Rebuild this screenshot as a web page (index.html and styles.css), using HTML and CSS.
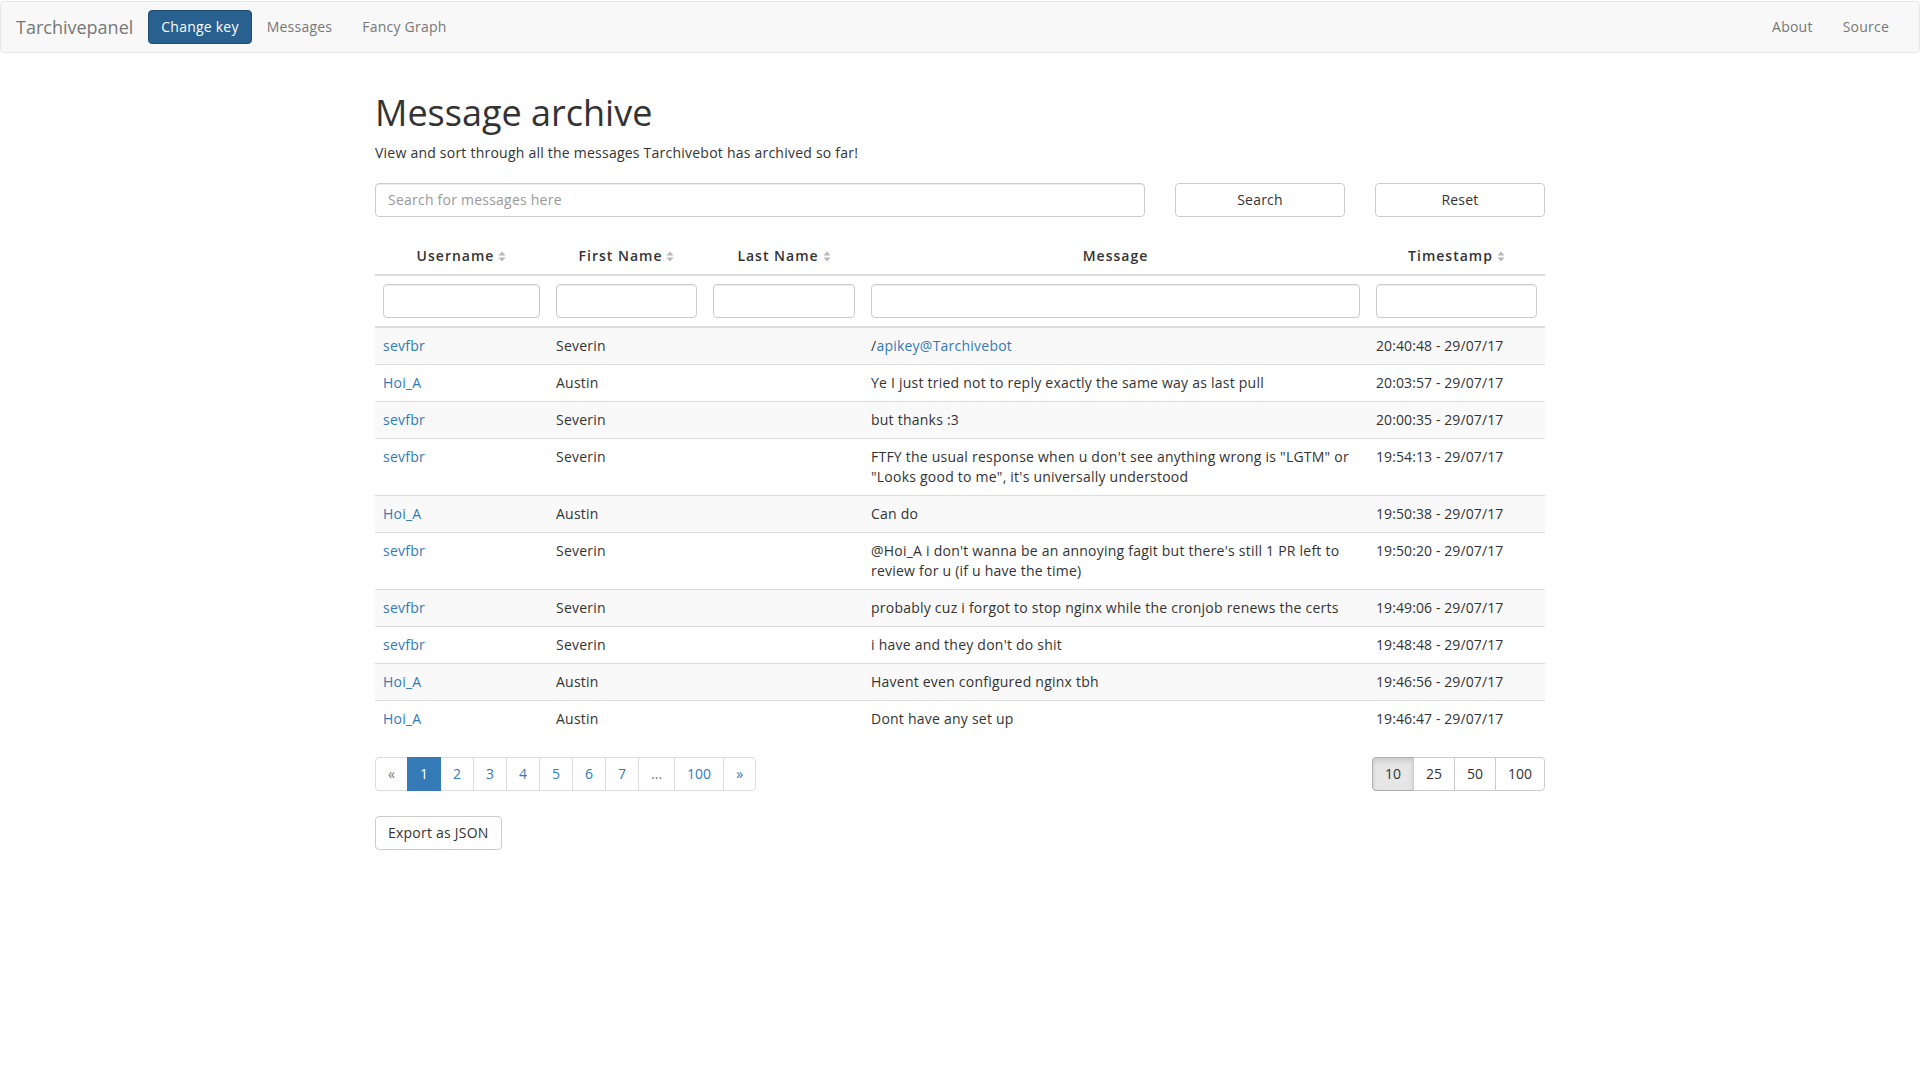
FILE: index.html
```html
<!DOCTYPE html>
<html lang="en">
<head>
<meta charset="utf-8">
<title>Tarchivepanel</title>
<link rel="stylesheet" href="styles.css">
</head>
<body>
<nav class="navbar">
  <div class="nav-left">
    <a class="brand" href="#">Tarchivepanel</a>
    <button class="btn-key">Change key</button>
    <a class="nav-link" href="#">Messages</a>
    <a class="nav-link" href="#">Fancy Graph</a>
  </div>
  <div class="nav-right">
    <a class="nav-link" href="#">About</a>
    <a class="nav-link" href="#">Source</a>
  </div>
</nav>

<main class="container">
  <h1 class="title">Message archive</h1>
  <p class="lead">View and sort through all the messages Tarchivebot has archived so far!</p>

  <div class="search-row">
    <input class="input search-input" type="text" placeholder="Search for messages here">
    <button class="btn">Search</button>
    <button class="btn">Reset</button>
  </div>

  <table class="table">
    <colgroup>
      <col class="c-user"><col class="c-first"><col class="c-last"><col class="c-msg"><col class="c-time">
    </colgroup>
    <thead>
      <tr class="head-row">
        <th>Username<svg class="sort" width="8" height="11" viewBox="0 0 8 11"><path d="M4 0.5L7.5 4.5H0.5Z M4 10.5L7.5 6.5H0.5Z" fill="#b8b8b8"/></svg></th>
        <th>First Name<svg class="sort" width="8" height="11" viewBox="0 0 8 11"><path d="M4 0.5L7.5 4.5H0.5Z M4 10.5L7.5 6.5H0.5Z" fill="#b8b8b8"/></svg></th>
        <th>Last Name<svg class="sort" width="8" height="11" viewBox="0 0 8 11"><path d="M4 0.5L7.5 4.5H0.5Z M4 10.5L7.5 6.5H0.5Z" fill="#b8b8b8"/></svg></th>
        <th>Message</th>
        <th>Timestamp<svg class="sort" width="8" height="11" viewBox="0 0 8 11"><path d="M4 0.5L7.5 4.5H0.5Z M4 10.5L7.5 6.5H0.5Z" fill="#b8b8b8"/></svg></th>
      </tr>
      <tr class="filter-row">
        <th><input class="input" type="text"></th>
        <th><input class="input" type="text"></th>
        <th><input class="input" type="text"></th>
        <th><input class="input" type="text"></th>
        <th><input class="input" type="text"></th>
      </tr>
    </thead>
    <tbody>
      <tr><td><a href="#">sevfbr</a></td><td>Severin</td><td></td><td>/<a href="#">apikey@Tarchivebot</a></td><td class="ts">20:40:48 - 29/07/17</td></tr>
      <tr><td><a href="#">Hoi_A</a></td><td>Austin</td><td></td><td>Ye I just tried not to reply exactly the same way as last pull</td><td class="ts">20:03:57 - 29/07/17</td></tr>
      <tr><td><a href="#">sevfbr</a></td><td>Severin</td><td></td><td>but thanks :3</td><td class="ts">20:00:35 - 29/07/17</td></tr>
      <tr><td><a href="#">sevfbr</a></td><td>Severin</td><td></td><td>FTFY the usual response when u don't see anything wrong is "LGTM" or "Looks good to me", it's universally understood</td><td class="ts">19:54:13 - 29/07/17</td></tr>
      <tr><td><a href="#">Hoi_A</a></td><td>Austin</td><td></td><td>Can do</td><td class="ts">19:50:38 - 29/07/17</td></tr>
      <tr><td><a href="#">sevfbr</a></td><td>Severin</td><td></td><td>@Hoi_A i don't wanna be an annoying fagit but there's still 1 PR left to review for u (if u have the time)</td><td class="ts">19:50:20 - 29/07/17</td></tr>
      <tr><td><a href="#">sevfbr</a></td><td>Severin</td><td></td><td>probably cuz i forgot to stop nginx while the cronjob renews the certs</td><td class="ts">19:49:06 - 29/07/17</td></tr>
      <tr><td><a href="#">sevfbr</a></td><td>Severin</td><td></td><td>i have and they don't do shit</td><td class="ts">19:48:48 - 29/07/17</td></tr>
      <tr><td><a href="#">Hoi_A</a></td><td>Austin</td><td></td><td>Havent even configured nginx tbh</td><td class="ts">19:46:56 - 29/07/17</td></tr>
      <tr><td><a href="#">Hoi_A</a></td><td>Austin</td><td></td><td>Dont have any set up</td><td class="ts">19:46:47 - 29/07/17</td></tr>
    </tbody>
  </table>

  <div class="pager-row">
    <ul class="pagination">
      <li class="disabled"><span>&laquo;</span></li>
      <li class="active"><span>1</span></li>
      <li><a href="#">2</a></li>
      <li><a href="#">3</a></li>
      <li><a href="#">4</a></li>
      <li><a href="#">5</a></li>
      <li><a href="#">6</a></li>
      <li><a href="#">7</a></li>
      <li class="disabled"><span>...</span></li>
      <li><a href="#">100</a></li>
      <li><a href="#">&raquo;</a></li>
    </ul>
    <div class="btn-group">
      <button class="btn-sm active">10</button>
      <button class="btn-sm">25</button>
      <button class="btn-sm">50</button>
      <button class="btn-sm">100</button>
    </div>
  </div>

  <button class="btn btn-export">Export as JSON</button>
</main>
</body>
</html>
```

FILE: styles.css
```css
* { box-sizing: border-box; }

html, body {
  margin: 0;
  padding: 0;
}

body {
  font-family: "Open Sans", "Liberation Sans", sans-serif;
  font-size: 14px;
  line-height: 20px;
  letter-spacing: 0.23px;
  color: #333;
  background: #fff;
  padding-top: 1px;
}

a { color: #337ab7; text-decoration: none; }

button, input { letter-spacing: 0.23px; }

/* Navbar */
.navbar {
  display: flex;
  justify-content: space-between;
  align-items: stretch;
  height: 52px;
  background: #f8f8f8;
  border: 1px solid #e7e7e7;
  border-radius: 4px;
  padding: 0 15px 0 0;
}

.nav-left, .nav-right {
  display: flex;
  align-items: flex-start;
}

.brand {
  font-size: 18px;
  line-height: 20px;
  padding: 15px 15px;
  color: #777;
  letter-spacing: 0;
}

.btn-key {
  margin-top: 8px;
  font-family: inherit;
  font-size: 14px;
  line-height: 20px;
  padding: 6px 12px;
  color: #fff;
  background: #286090;
  border: 1px solid #204d74;
  border-radius: 4px;
}

.nav-link {
  padding: 15px 15px;
  color: #777;
  line-height: 20px;
}

/* Main */
.container {
  width: 1170px;
  margin: 0 auto;
  padding-top: 20px;
  padding-bottom: 40px;
}

.title {
  font-family: inherit;
  font-weight: 400;
  font-size: 36px;
  line-height: 1.1;
  margin: 20px 0 10px;
  color: #333;
  letter-spacing: 0;
}

.lead {
  margin: 0 0 20px;
}

.search-row {
  display: grid;
  grid-template-columns: 770px 170px 170px;
  column-gap: 30px;
  margin-bottom: 21px;
}

.input {
  display: block;
  width: 100%;
  height: 34px;
  padding: 6px 12px;
  font-family: inherit;
  font-size: 14px;
  line-height: 20px;
  color: #555;
  background: #fff;
  border: 1px solid #ccc;
  border-radius: 4px;
  box-shadow: inset 0 1px 1px rgba(0,0,0,.075);
}

.input::placeholder { color: #999; }

.btn {
  height: 34px;
  padding: 6px 12px;
  font-family: inherit;
  font-size: 14px;
  line-height: 20px;
  color: #333;
  background: #fff;
  border: 1px solid #ccc;
  border-radius: 4px;
}

/* Table */
.table {
  width: 100%;
  table-layout: fixed;
  border-collapse: collapse;
  border-spacing: 0;
  margin-bottom: 20px;
}

.c-user { width: 173px; }
.c-first { width: 157px; }
.c-last { width: 158px; }
.c-msg { width: 505px; }
.c-time { width: 177px; }

.table th, .table td {
  padding: 8px;
  vertical-align: top;
  text-align: left;
  line-height: 20px;
}

.head-row th {
  text-align: center;
  font-weight: 600;
  border-bottom: 2px solid #ddd;
  vertical-align: bottom;
  letter-spacing: 1px;
}

.filter-row th {
  border-bottom: 2px solid #ddd;
}

.sort {
  margin-left: 4px;
  vertical-align: -1px;
}

.table tbody td {
  border-top: 1px solid #ddd;
}

.table tbody td.ts {
  letter-spacing: 0.1px;
}

.table tbody tr:nth-child(odd) {
  background: #f9f9f9;
}

/* Pager */
.pager-row {
  display: flex;
  justify-content: space-between;
  align-items: flex-start;
  margin-bottom: 25px;
}

.pagination {
  display: flex;
  list-style: none;
  margin: 0;
  padding: 0;
  letter-spacing: 0;
}

.pagination li > a, .pagination li > span {
  display: block;
  padding: 6px 12px;
  line-height: 20px;
  border: 1px solid #ddd;
  margin-left: -1px;
  background: #fff;
  color: #337ab7;
}

.pagination li:first-child > span {
  margin-left: 0;
  border-radius: 4px 0 0 4px;
}

.pagination li:last-child > a {
  border-radius: 0 4px 4px 0;
}

.pagination li.disabled > span {
  color: #777;
}

.pagination li.active > span {
  background: #337ab7;
  border-color: #337ab7;
  color: #fff;
  position: relative;
  z-index: 1;
}

.btn-group {
  display: flex;
}

.btn-sm {
  padding: 6px 12px;
  font-family: inherit;
  font-size: 14px;
  line-height: 20px;
  letter-spacing: 0;
  color: #333;
  background: #fff;
  border: 1px solid #ccc;
  margin-left: -1px;
}

.btn-sm:first-child { border-radius: 4px 0 0 4px; margin-left: 0; }
.btn-sm:last-child { border-radius: 0 4px 4px 0; }

.btn-sm.active {
  background: #e6e6e6;
  border-color: #adadad;
  box-shadow: inset 0 3px 5px rgba(0,0,0,.125);
}

.btn-export {
  height: 34px;
}
```
